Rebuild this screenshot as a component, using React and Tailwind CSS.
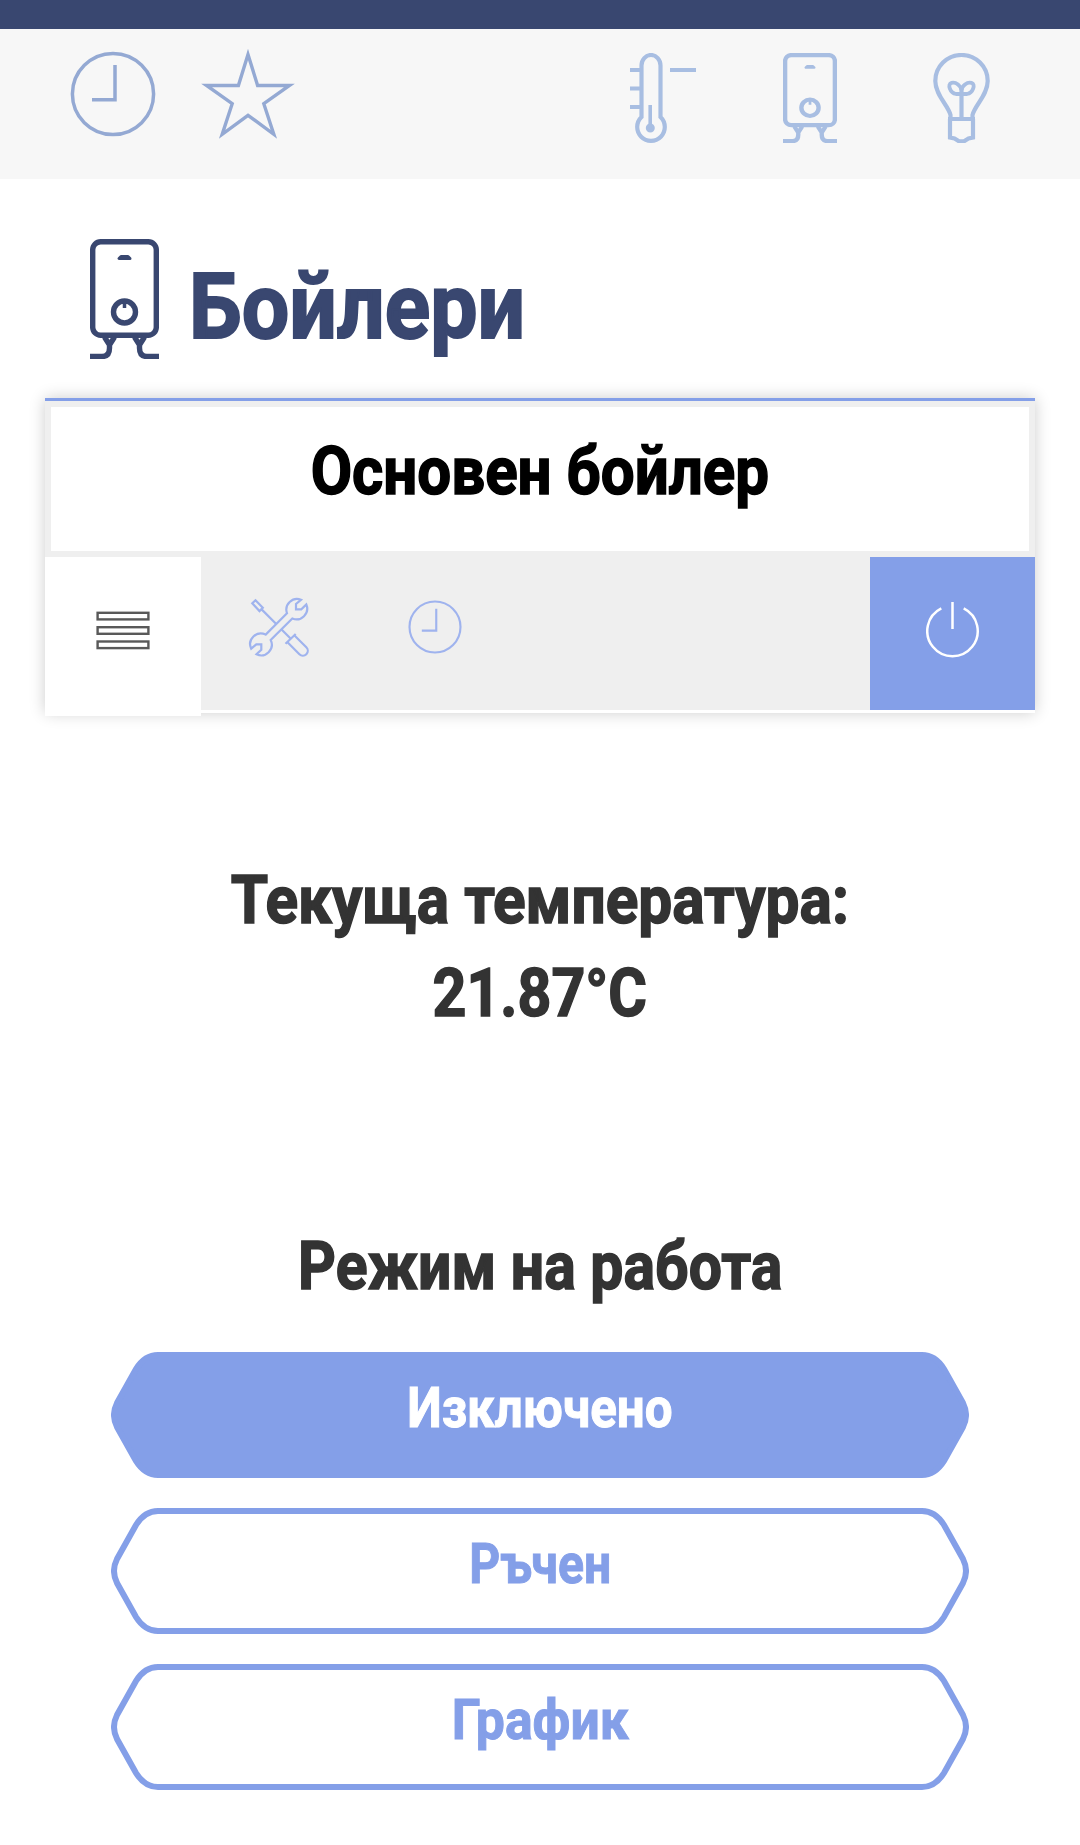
import React, { useState } from "react";

const ClockIcon = ({ className, strokeWidth }) => (
  <svg viewBox="0 0 86 86" fill="none" stroke="currentColor" strokeWidth={strokeWidth} className={className}>
    <circle cx="43" cy="43" r="40.6" />
    <path d="M45 14V48.7H22" />
  </svg>
);

const StarIcon = ({ className }) => (
  <svg viewBox="0 0 96 92" fill="none" stroke="currentColor" strokeWidth="3.4" className={className}>
    <path d="M48 6.5L57.6 37.5H89.5L63.8 55.7L73.8 86.3L48 67.3L22.2 86.3L32.2 55.7L6.5 37.5H38.4Z" />
  </svg>
);

const ThermometerIcon = ({ className }) => (
  <svg viewBox="0 0 67 90" fill="none" stroke="currentColor" strokeWidth="4.2" className={className}>
    <path d="M12.500 64V12.500A9.500 10.500 0 0 1 31.500 12.500V64A13.800 13.800 0 1 1 12.500 64Z" />
    <path d="M21.200 52V75" strokeWidth="3.600" />
    <circle cx="21.300" cy="75" r="3" fill="currentColor" strokeWidth="3" />
    <path d="M1 17H11M1 35.500H11M1 54H11M41 17H67" strokeWidth="4" />
  </svg>
);

const BoilerIcon = ({ className, strokeWidth }) => (
  <svg viewBox="0 0 69 120" preserveAspectRatio="none" fill="none" stroke="currentColor" strokeWidth={strokeWidth} className={className}>
    <rect x="2.7" y="2.7" width="63.600" height="93.600" rx="8" />
    <path d="M29 19.500H40L38 17.500H31Z" strokeWidth="3" strokeLinejoin="round" fill="currentColor" />
    <circle cx="34.500" cy="73" r="11" />
    <path d="M34.500 62V69" strokeWidth="3.500" />
    <path d="M14.500 98L19.500 106L24.500 98M19.500 105V109Q19.500 117.500 12 117.500H0" />
    <path d="M54.500 98L49.500 106L44.500 98M49.500 105V109Q49.500 117.500 57 117.500H69" />
  </svg>
);

const BulbIcon = ({ className }) => (
  <svg viewBox="0 0 57 90" fill="none" stroke="currentColor" strokeWidth="4.200" className={className}>
    <path d="M17.500 66V62C15 52 2.300 42 2.300 28A26.200 26 0 0 1 54.700 28C54.700 42 42 52 39.500 62V66" />
    <path d="M15 66H42M17 66V84.500L21.500 85.500L26 88.300H31L35.500 85.500L40 84.500V66M28.500 36V66" />
    <path d="M28.500 41H23C17 40 14 31 18.500 29.800C23 28.500 28 33 28.500 37C29 33 34 28.500 38.500 29.800C43 31 40 40 34 41H28.500" strokeWidth="3.800" />
  </svg>
);

const MenuIcon = ({ className }) => (
  <svg viewBox="0 0 54 40" fill="none" stroke="currentColor" strokeWidth="2.400" className={className}>
    <rect x="1.600" y="2.800" width="50.800" height="6.600" />
    <rect x="1.600" y="17.200" width="50.800" height="6.600" />
    <rect x="1.600" y="31.500" width="50.800" height="6.600" />
  </svg>
);

const ToolsIcon = ({ className }) => (
  <svg viewBox="0 0 62 62" fill="none" stroke="currentColor" strokeWidth="2.200" className={className}>
    <path d="M4.300 7.300L7.500 4.300L14.800 11.800L11.500 15.100ZM13.600 13.400L28 27.800M33.300 33.300L42.300 42.300M47.700 38L37.500 47.700" />
    <path d="M46.500 39.500L58.300 51.300A4.900 4.900 0 0 1 51.400 58.300L39.500 46.300" />
    <path d="M53 3.800A10.700 10.700 0 0 0 39 17.300L17.700 38.600A10.700 10.700 0 0 0 3.200 52.700L8.300 48.300H13.300V53.700L8.500 58.300A10.700 10.700 0 0 0 22.700 44L44.300 22.500A10.700 10.700 0 0 0 58.300 8.500L53.300 13.300H48V8Z" />
  </svg>
);

const PowerIcon = ({ className }) => (
  <svg viewBox="0 0 54 58" fill="none" stroke="currentColor" strokeWidth="2.500" className={className}>
    <path d="M15.300 7.400A25.200 25.200 0 1 0 37.700 7.400M26.500 1V28" />
  </svg>
);

const modes = [
  { id: "off", label: "Изключено", stretch: "scale-x-[0.897]" },
  { id: "manual", label: "Ръчен", stretch: "scale-x-[0.875]" },
  { id: "schedule", label: "График", stretch: "scale-x-[0.94]" },
];

const ModeButton = ({ mode, active, onClick }) => (
  <button
    onClick={onClick}
    className={`relative flex h-[126px] w-full items-center justify-center pb-[13px] text-[55px] leading-none font-bold [-webkit-text-stroke:1px] ${
      active ? "text-white" : "text-[#849fe8]"
    }`}
  >
    <svg
      viewBox="0 0 858 126"
      className="absolute inset-0 h-full w-full text-[#849fe8]"
      fill={active ? "currentColor" : "none"}
      stroke="currentColor"
      strokeWidth="6"
    >
      <path d="M47 3H811C820 3 828 9 833 17L852 51Q858 63 852 75L833 109C828 117 820 123 811 123H47C38 123 30 117 25 109L6 75Q0 63 6 51L25 17C30 9 38 3 47 3Z" />
    </svg>
    <span className={`relative ${mode.stretch}`}>{mode.label}</span>
  </button>
);

const App = () => {
  const [activeMode, setActiveMode] = useState("off");

  return (
    <div className="min-h-[1845px] w-[1080px] bg-white font-['Roboto',sans-serif]">
      <div className="h-[29px] bg-[#394770]" />

      {/* Navigation */}
      <nav className="flex h-[150px] items-start bg-[#f7f7f7] pr-[90px] pl-[70px] text-[#94a9d3]">
        <ClockIcon className="mt-[22px] h-[86px] w-[86px]" strokeWidth={3.5} />
        <StarIcon className="mt-[19px] ml-[44px] h-[92px] w-[96px]" />
        <div className="mt-[24px] ml-auto flex text-[#a8bee2]">
          <ThermometerIcon className="h-[90px] w-[67px]" />
          <BoilerIcon className="ml-[87px] h-[90px] w-[54px]" strokeWidth={5.6} />
          <BulbIcon className="ml-[96px] h-[90px] w-[57px]" />
        </div>
      </nav>

      {/* Page title */}
      <div className="mt-[60px] flex h-[120px] items-center pl-[90px] text-[#394770]">
        <BoilerIcon className="h-[120px] w-[69px]" strokeWidth={5.4} />
        <h1 className="ml-[30px] origin-left scale-x-[0.925] pt-[17px] text-[91px] leading-none font-bold [-webkit-text-stroke:2px]">
          Бойлери
        </h1>
      </div>

      {/* Device card */}
      <section className="mx-[45px] mt-[39px] h-[315px] border-t-3 border-[#849fe8] bg-white shadow-[0_0_15px_rgba(0,0,0,0.2)]">
        <div className="flex h-[156px] items-center justify-center border-6 border-[#efefef] pb-[14px]">
          <h2 className="scale-x-[0.91] text-[66px] leading-none font-bold text-black [-webkit-text-stroke:1.5px]">
            Основен бойлер
          </h2>
        </div>
        <div className="flex h-[153px] bg-[#efefef]">
          <button className="flex h-[159px] w-[156px] justify-center bg-white pt-[53px] text-[#595959]">
            <MenuIcon className="h-[40px] w-[54px]" />
          </button>
          <button className="flex w-[156px] justify-center pt-[39px] text-[#9fb3ee]">
            <ToolsIcon className="h-[62px] w-[62px]" />
          </button>
          <button className="flex w-[156px] justify-center pt-[43px] text-[#9fb3ee]">
            <ClockIcon className="h-[54px] w-[54px]" strokeWidth={3.4} />
          </button>
          <button className="ml-auto flex w-[165px] justify-center bg-[#849fe8] pt-[44px] text-white">
            <PowerIcon className="h-[58px] w-[54px]" />
          </button>
        </div>
      </section>

      {/* Current temperature */}
      <div className="mt-[141px] flex flex-col items-center text-[66px] leading-[93px] font-bold text-[#333333] [-webkit-text-stroke:1.5px]">
        <span className="scale-x-[0.915]">Текуща температура:</span>
        <span className="scale-x-[0.895]">21.87°C</span>
      </div>

      {/* Operating mode */}
      <div className="mt-[180px] flex flex-col items-center text-[66px] leading-[93px] font-bold text-[#333333] [-webkit-text-stroke:1.5px]">
        <h3 className="scale-x-[0.893]">Режим на работа</h3>
      </div>
      <div className="mx-[111px] mt-[39px] flex flex-col gap-[30px]">
        {modes.map((mode) => (
          <ModeButton
            key={mode.id}
            mode={mode}
            active={activeMode === mode.id}
            onClick={() => setActiveMode(mode.id)}
          />
        ))}
      </div>
    </div>
  );
};

export default App;
